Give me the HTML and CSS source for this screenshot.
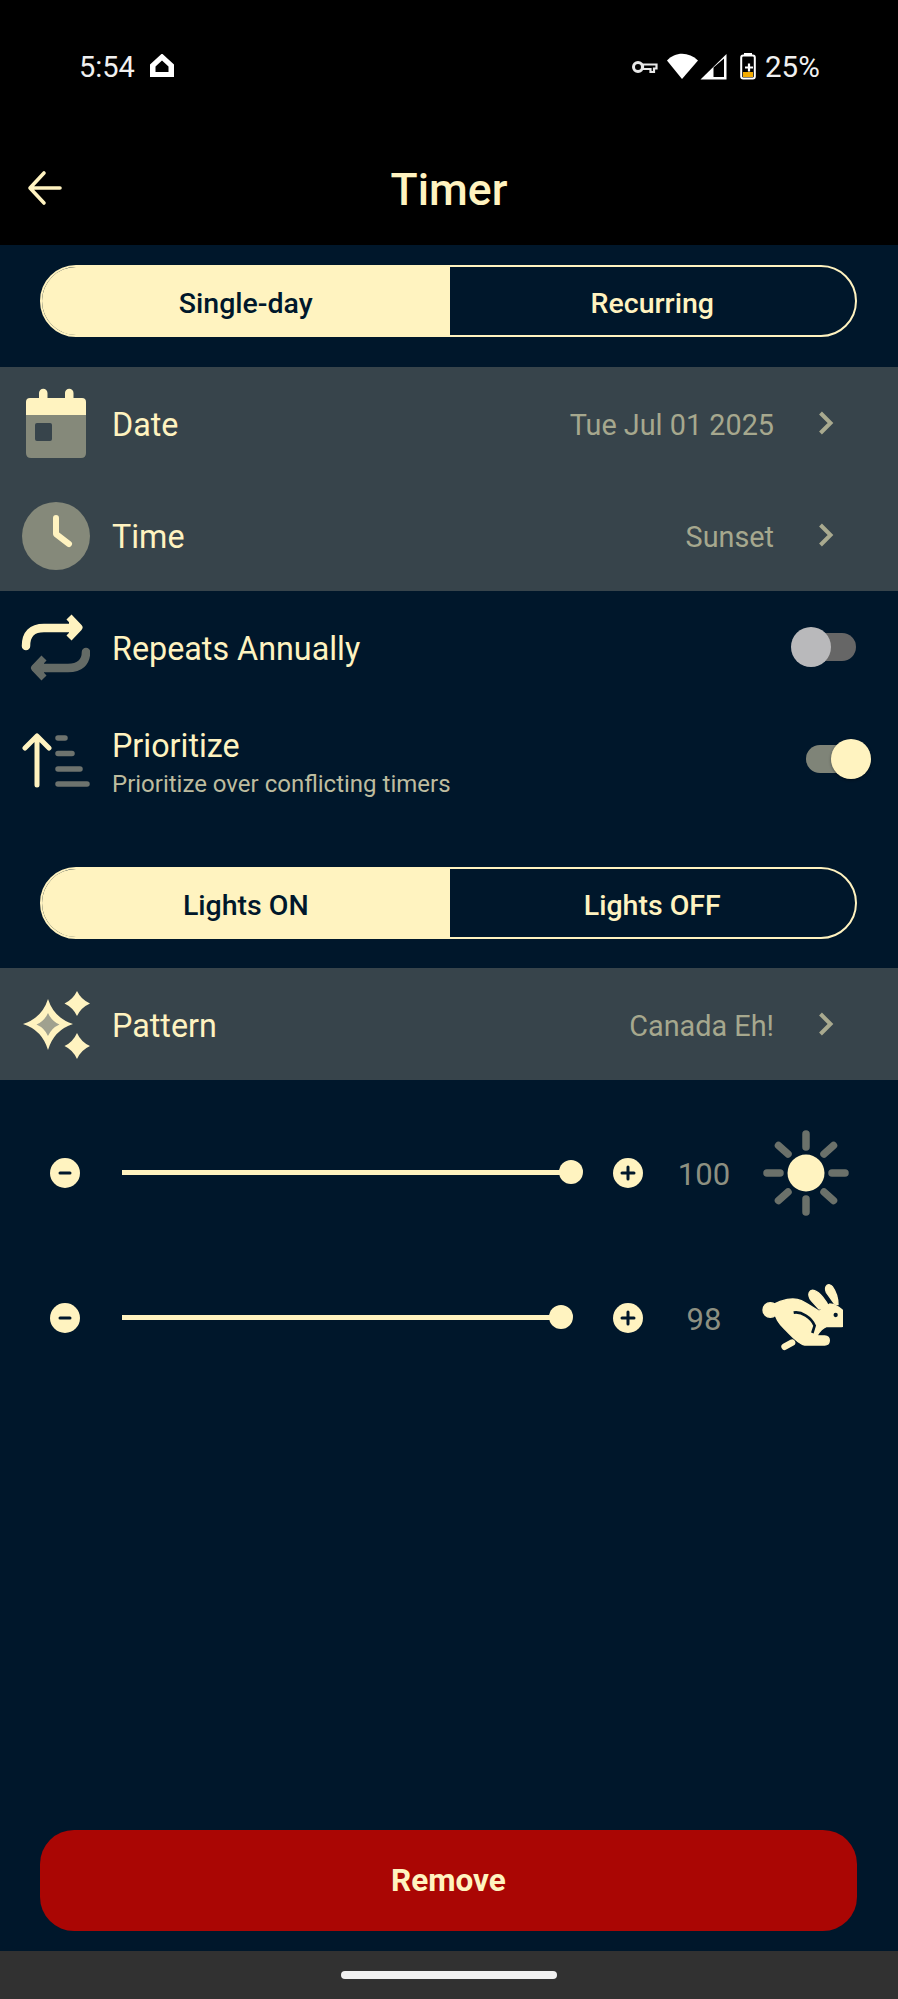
FILE: index.html
```html
<!DOCTYPE html>
<html lang="en">
<head>
<meta charset="utf-8">
<title>Timer</title>
<link rel="stylesheet" href="styles.css">
</head>
<body>
<div class="page">
  <header class="topbar">
    <div class="status">
      <span class="clock">5:54</span>
      <svg class="st-home" viewBox="150 54 24 24"><path fill-rule="evenodd" d="M162 53.500 L174 64.500 V77 H150 V64.500 Z M162 60.500 L155.500 66.500 V72 H168.500 V66.500 Z" fill="#fff"/></svg>
      <svg class="st-icons" viewBox="630 50 130 32">
        <circle cx="638" cy="67" r="4.500" fill="none" stroke="#e8e8e8" stroke-width="3"/>
        <path d="M643 64.500 H656.500 V68.500 H654 V72 H650.500 V69 H643 Z" fill="none" stroke="#e8e8e8" stroke-width="2.200"/>
        <path d="M682 79 L667 60.5 C675 51.5 689 51.5 698 60.5 Z" fill="#fff"/>
        <path d="M700.500 79.500 L726.500 54 V79.500 Z" fill="#fff"/>
        <path d="M713.5 77 V67.500 L724 58.500 V77 Z" fill="#000"/>
        <path d="M744 53 H752 V56 H744 Z" fill="#fff"/>
        <rect x="741.2" y="55.5" width="13.6" height="23" rx="2" fill="none" stroke="#fff" stroke-width="2"/>
        <rect x="743" y="72" width="10" height="5" fill="#f3ab00"/>
        <path d="M745 67.5 H753 M749 63.5 V71.5" stroke="#fff" stroke-width="2.2"/>
      </svg>
      <span class="battery-pct">25%</span>
    </div>
    <div class="titlebar">
      <svg class="back" viewBox="0 0 36 36"><path d="M33 18 H4 M17 3 L3 18 L17 33" fill="none" stroke="#fff3c0" stroke-width="3.6" stroke-linecap="round" stroke-linejoin="round"/></svg>
      <h1 class="title">Timer</h1>
    </div>
  </header>

  <main class="content">
    <div class="seg seg-first">
      <div class="seg-btn seg-on">Single-day</div>
      <div class="seg-btn">Recurring</div>
    </div>

    <section class="group">
      <div class="row">
        <svg class="row-icon" viewBox="20 383 70 80">
          <path d="M26 415 V402 Q26 398 30 398 H39 V393 A4 4 0 0 1 47.500 393 V398 H65 V393 A4 4 0 0 1 73.500 393 V398 H82 Q86 398 86 402 V415 Z" fill="#fff3c0"/>
          <path d="M26 415 H86 V453 Q86 458 81 458 H31 Q26 458 26 453 Z" fill="#85897a"/>
          <rect x="35" y="423" width="17" height="18" rx="2" fill="#37444b"/>
        </svg>
        <span class="label">Date</span>
        <span class="value">Tue Jul 01 2025</span>
        <svg class="chev" viewBox="0 0 16 24"><path d="M2.500 2 L12.500 12 L2.500 22" fill="none" stroke="#a9aa8f" stroke-width="4"/></svg>
      </div>
      <div class="row">
        <svg class="row-icon" viewBox="20 495 70 80">
          <circle cx="56" cy="536" r="34" fill="#85897a"/>
          <path d="M56 518 V534 L69 544" fill="none" stroke="#fff3c0" stroke-width="6" stroke-linecap="round" stroke-linejoin="round"/>
        </svg>
        <span class="label">Time</span>
        <span class="value">Sunset</span>
        <svg class="chev" viewBox="0 0 16 24"><path d="M2.500 2 L12.500 12 L2.500 22" fill="none" stroke="#a9aa8f" stroke-width="4"/></svg>
      </div>
    </section>

    <section class="plain">
      <div class="row">
        <svg class="row-icon" viewBox="20 607 70 80">
          <path d="M26 646 C26 634 32 628 44 628 H76" fill="none" stroke="#fff3c0" stroke-width="8.500" stroke-linecap="round"/>
          <path d="M69 617 L79 627.500 L69 638" fill="#fff3c0" stroke="#fff3c0" stroke-width="7" stroke-linejoin="round"/>
          <path d="M86 652 C86 662 80 668 68 668 H36" fill="none" stroke="#646b66" stroke-width="8.500" stroke-linecap="round"/>
          <path d="M44 658 L34.500 668 L44 678" fill="#646b66" stroke="#646b66" stroke-width="7" stroke-linejoin="round"/>
        </svg>
        <span class="label">Repeats Annually</span>
        <div class="switch switch-off"><span class="knob"></span></div>
      </div>
      <div class="row">
        <svg class="row-icon" viewBox="20 719 70 80">
          <path d="M37 785 V737 M25 748 L37 736 L49 748" fill="none" stroke="#fff3c0" stroke-width="5" stroke-linecap="round" stroke-linejoin="round"/>
          <path d="M58 738 H65 M58 753.500 H72 M58 769 H80 M58 784 H87" fill="none" stroke="#6d736e" stroke-width="5.500" stroke-linecap="round"/>
        </svg>
        <div class="stack">
          <span class="label">Prioritize</span>
          <span class="sub">Prioritize over conflicting timers</span>
        </div>
        <div class="switch switch-on"><span class="knob"></span></div>
      </div>
    </section>

    <div class="seg seg-second">
      <div class="seg-btn seg-on">Lights ON</div>
      <div class="seg-btn">Lights OFF</div>
    </div>

    <section class="group group-pattern">
      <div class="row">
        <svg class="row-icon" viewBox="20 984 70 80">
          <path d="M48 999 Q54 1018 73 1024 Q54 1030 48 1050 Q42 1030 23 1024 Q42 1018 48 999 Z" fill="#fff3c0"/>
          <path d="M48 1013 Q51.500 1021 59.500 1024.500 Q51.500 1028 48 1036 Q44.500 1028 36.500 1024.500 Q44.500 1021 48 1013 Z" fill="#a0a18f"/>
          <path d="M77 991 Q81 999.500 90 1003.500 Q81 1007.500 77 1016 Q73 1007.500 64.500 1003.500 Q73 999.500 77 991 Z" fill="#fff3c0"/>
          <path d="M77 1033 Q81 1042 90 1046 Q81 1050 77 1059 Q73 1050 64.500 1046 Q73 1042 77 1033 Z" fill="#fff3c0"/>
        </svg>
        <span class="label">Pattern</span>
        <span class="value">Canada Eh!</span>
        <svg class="chev" viewBox="0 0 16 24"><path d="M2.500 2 L12.500 12 L2.500 22" fill="none" stroke="#a9aa8f" stroke-width="4"/></svg>
      </div>
    </section>

    <section class="sliders">
      <div class="slider">
        <svg class="step" viewBox="0 0 30 30"><circle cx="15" cy="15" r="15" fill="#fff3c0"/><path d="M10 15 H20" stroke="#00172b" stroke-width="3" stroke-linecap="round"/></svg>
        <div class="track"><div class="fill" style="width:449px"><span class="thumb"></span></div></div>
        <svg class="step" viewBox="0 0 30 30"><circle cx="15" cy="15" r="15" fill="#fff3c0"/><path d="M9 15 H21 M15 9 V21" stroke="#00172b" stroke-width="3" stroke-linecap="round"/></svg>
        <span class="num">100</span>
        <svg class="end-icon sun" viewBox="0 0 90 90">
          <path d="M45 6 V19 M45 71 V84 M6 45 H19 M71 45 H84 M17.500 17.500 L27 26 M63 64 L72.500 72.500 M72.500 17.500 L63 26 M27 64 L17.500 72.500" stroke="#6b716a" stroke-width="7.500" stroke-linecap="round"/>
          <circle cx="45" cy="45" r="18.500" fill="#fff3c0"/>
        </svg>
      </div>
      <div class="slider">
        <svg class="step" viewBox="0 0 30 30"><circle cx="15" cy="15" r="15" fill="#fff3c0"/><path d="M10 15 H20" stroke="#00172b" stroke-width="3" stroke-linecap="round"/></svg>
        <div class="track"><div class="fill" style="width:439px"><span class="thumb"></span></div></div>
        <svg class="step" viewBox="0 0 30 30"><circle cx="15" cy="15" r="15" fill="#fff3c0"/><path d="M9 15 H21 M15 9 V21" stroke="#00172b" stroke-width="3" stroke-linecap="round"/></svg>
        <span class="num">98</span>
        <svg class="end-icon rabbit" viewBox="640 517 270 270">
          <g fill="#fff3c0" stroke="#fff3c0" stroke-width="4" stroke-linejoin="round">
            <circle cx="692" cy="628" r="22"/>
            <path d="M700 612 C725 598 760 588 785 600 C805 610 822 622 838 632 L870 610 C895 612 923 636 923 658 C923 670 915 678 900 678 L860 678 C848 682 838 695 832 705 L855 706 C875 708 872 733 855 733 L795 733 C775 730 755 705 735 685 C720 670 705 655 700 612 Z"/>
            <path d="M838 625 L815 600 C800 580 810 565 825 570 C840 575 860 600 868 620 Z"/>
            <path d="M885 610 L860 575 C852 555 868 545 878 558 C888 572 895 590 895 612 Z"/>
          </g>
          <path d="M735 738 L757 726" stroke="#fff3c0" stroke-width="20" stroke-linecap="round"/>
          <path d="M762 636 C785 632 815 650 825 675 L818 697" fill="none" stroke="#00172b" stroke-width="8"/>
          <circle cx="888" cy="643" r="6.500" fill="#00172b"/>
        </svg>
      </div>
    </section>

    <button class="remove">Remove</button>
  </main>

  <footer class="navbar"><span class="pill"></span></footer>
</div>
</body>
</html>
```
FILE: styles.css
```css
* { box-sizing: border-box; }
html, body { margin: 0; padding: 0; background: #00172b; }
body { font-family: Roboto, "Noto Sans", sans-serif; color: #fff3c0; }
.page { width: 898px; height: 1999px; display: flex; flex-direction: column; overflow: hidden; }

.topbar { background: #000; height: 245px; flex: none; display: flex; flex-direction: column; }
.status { height: 132px; display: flex; align-items: flex-start; padding: 50px 0 0 79px; color: #f0f0f0; font-size: 29px; line-height: 34px; }
.clock { width: 71px; }
.st-home { width: 24px; height: 24px; margin-top: 4px; }
.st-icons { width: 130px; height: 32px; margin-left: 456px; }
.battery-pct { margin-left: 5px; font-size: 29.500px; }
.titlebar { position: relative; height: 113px; display: flex; align-items: flex-start; justify-content: center; }
.back { position: absolute; left: 27px; top: 38px; width: 36px; height: 36px; }
.title { margin: 0; font-size: 44.500px; font-weight: 500; line-height: 52px; padding-top: 32px; color: #fff3c0; }

.content { flex: 1; display: flex; flex-direction: column; min-height: 0; }

.seg { height: 72px; margin: 0 41px 0 40px; display: flex; border: 2px solid #fff3c0; border-radius: 36px; overflow: hidden; flex: none; }
.seg-first { margin-top: 20px; }
.seg-second { margin-top: 52px; }
.seg-btn { width: 50%; display: flex; align-items: center; justify-content: center; padding-top: 4px; font-size: 28.500px; font-weight: 500; color: #fff3c0; }
.seg-on { background: #fff3c0; color: #00172b; width: calc(50% + 2px); }

.group { margin-top: 30px; background: #37444b; flex: none; }
.group-pattern { margin-top: 29px; }
.row { height: 112px; display: flex; align-items: center; padding-left: 20px; padding-right: 64px; position: relative; }
.row-icon { width: 70px; height: 80px; flex: none; margin-right: 22px; }
.label { font-size: 32.300px; line-height: 38px; color: #fff3c0; padding-top: 4px; }
.value { margin-left: auto; font-size: 28.800px; line-height: 34px; color: #a6a88e; padding-top: 4px; }
.chev { width: 16px; height: 24px; margin-left: 44px; flex: none; }
.stack { display: flex; flex-direction: column; padding-top: 3px; }
.sub { font-size: 24px; line-height: 28px; color: #bdbc9f; margin-top: 5px; }

.switch { position: absolute; left: 806px; top: 42px; width: 50px; height: 28px; border-radius: 14px; }
.switch-off { background: #666; }
.switch-on { background: #7f8478; }
.knob { position: absolute; top: -6px; width: 40px; height: 40px; border-radius: 50%; }
.switch-off .knob { left: -15px; background: #b9b9bb; }
.switch-on .knob { left: 25px; background: #fff3c0; box-shadow: 0 1px 3px rgba(0,0,0,0.4); }

.sliders { padding-top: 20px; flex: none; }
.slider { height: 145px; display: flex; align-items: center; padding-left: 50px; }
.step { width: 30px; height: 30px; flex: none; }
.track { width: 461px; margin: 0 30px 0 42px; flex: none; }
.fill { position: relative; height: 5px; background: #fff3c0; }
.thumb { position: absolute; right: -12px; top: -10px; width: 24px; height: 24px; border-radius: 50%; background: #fff3c0; }
.num { width: 122px; text-align: center; font-size: 31px; padding-top: 4px; color: #8d9081; }
.end-icon { width: 90px; height: 90px; flex: none; }
.sun { margin-left: -4px; }
.rabbit { margin-left: -12px; }

.remove { margin: auto 41px 20px 40px; height: 101px; border: 0; border-radius: 34px; background: #aa0604; color: #fff3c0; font-family: inherit; font-size: 31.500px; font-weight: 700; flex: none; }

.navbar { height: 48px; background: #313131; flex: none; display: flex; justify-content: center; padding-top: 20px; }
.pill { width: 216px; height: 8px; background: #f0f0f0; border-radius: 4px; }
```
